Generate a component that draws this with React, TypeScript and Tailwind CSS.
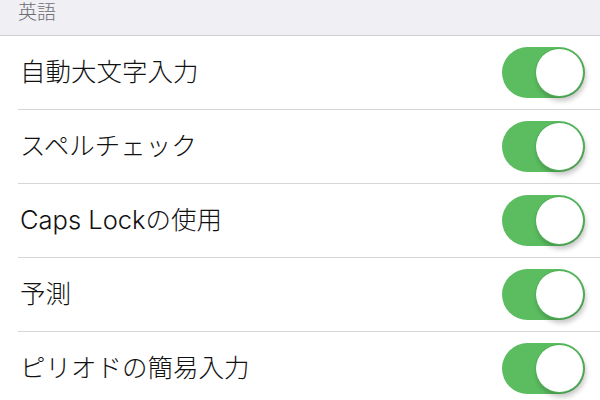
const rows = [
  "自動大文字入力",
  "スペルチェック",
  "Caps Lockの使用",
  "予測",
  "ピリオドの簡易入力",
];

function Toggle() {
  return (
    <div className="relative h-[51px] w-[83px] shrink-0 rounded-full bg-[#5cbd60]">
      <div className="absolute right-[1px] top-[1px] h-[49px] w-[49px] rounded-full border-[1.5px] border-[#45ab4c] bg-white shadow-[2px_4px_5px_rgba(0,0,0,0.22)]" />
    </div>
  );
}

export default function App() {
  return (
    <div
      className="h-[400px] w-[600px] overflow-hidden bg-white"
      style={{ fontFamily: 'Inter, "Noto Sans CJK JP", sans-serif' }}
    >
      <div className="flex h-[36px] items-start border-b border-[#cfced3] bg-[#efeff4] pl-[18px] pt-[1px]">
        <span className="text-[19px] font-light leading-[24px] text-[#6d6d72]">英語</span>
      </div>
      {rows.map((label) => (
        <div key={label} className="pl-[18px]">
          <div className="flex h-[74px] items-center justify-between border-b border-[#d6d5da] pr-[15px]">
            <span className="pl-[2px] text-[25.5px] font-light text-[#111]">{label}</span>
            <Toggle />
          </div>
        </div>
      ))}
    </div>
  );
}
